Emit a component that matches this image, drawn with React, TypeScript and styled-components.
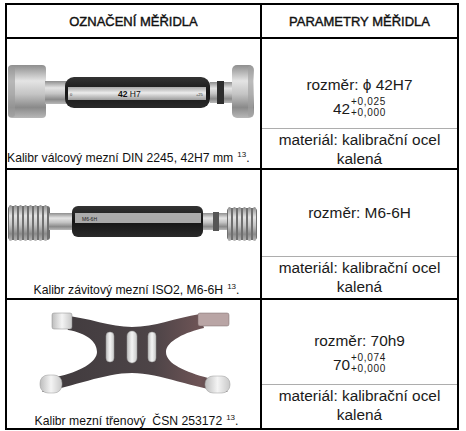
import { Fragment } from 'react';
import styled, { createGlobalStyle } from 'styled-components';

const GlobalStyle = createGlobalStyle`
	body {
		margin: 0;
		background: #fff;
		font-family: 'Liberation Sans', Arial, sans-serif;
	}
`;

const Page = styled.div`
	padding: 3px 0 0 5px;
`;

const Sheet = styled.div`
	display: grid;
	grid-template-columns: 253px 195px;
	grid-template-rows: 32px 129px 128px 128px;
	gap: 2px;
	padding: 2px;
	background: #000;
	width: max-content;
`;

const HeadCell = styled.div`
	background: #fff;
	display: flex;
	align-items: center;
	justify-content: center;
	padding-top: 1px;
	font-size: 13px;
	color: #111;
	-webkit-text-stroke: 0.4px #111;
`;

const ImageCell = styled.div`
	background: #fff;
	display: flex;
	flex-direction: column;
	overflow: hidden;
`;

const Art = styled.svg`
	display: block;
	flex: 1;
`;

const Caption = styled.div<{ $align: 'left' | 'center'; $lift: number }>`
	font-size: 12.2px;
	line-height: 14px;
	color: #111;
	white-space: nowrap;
	text-align: ${({ $align }) => $align};
	padding: 0 0 ${({ $lift }) => $lift}px ${({ $align }) => ($align === 'center' ? 6 : 0)}px;
`;

const Sup = styled.sup`
	font-size: 8px;
	line-height: 0;
	vertical-align: 5px;
	margin-left: 4px;
`;

const ParamCell = styled.div`
	background: #fff;
	display: flex;
	flex-direction: column;
	color: #1a1a1a;
	font-size: 15.4px;
`;

const Upper = styled.div<{ $pos: 'end' | 'center' }>`
	flex: 1;
	display: flex;
	flex-direction: column;
	align-items: center;
	justify-content: ${({ $pos }) => ($pos === 'end' ? 'flex-end' : 'center')};
	padding-bottom: ${({ $pos }) => ($pos === 'end' ? 7 : 2)}px;
`;

const Line = styled.div`
	line-height: 19px;
	white-space: nowrap;
`;

const Tol = styled.div`
	line-height: 24px;
	margin-top: 3px;
	white-space: nowrap;
`;

const Stack = styled.span`
	display: inline-flex;
	flex-direction: column;
	font-size: 10px;
	line-height: 10.5px;
	letter-spacing: 0.7px;
	vertical-align: 9px;
	margin-left: 1px;
`;

const Lower = styled.div<{ $h: number }>`
	height: ${({ $h }) => $h}px;
	border-top: 1px solid #adadad;
	padding-top: 1px;
	line-height: 19px;
	text-align: center;
`;

const Defs = () => (
	<defs>
		<linearGradient id='metal' x1='0' y1='0' x2='0' y2='1'>
			<stop offset='0' stopColor='#8e8e8e' />
			<stop offset='0.3' stopColor='#e4e4e4' />
			<stop offset='0.55' stopColor='#c4c4c4' />
			<stop offset='0.8' stopColor='#8a8a8a' />
			<stop offset='1' stopColor='#b8b8b8' />
		</linearGradient>
		<linearGradient id='band' x1='0' y1='0' x2='0' y2='1'>
			<stop offset='0' stopColor='#a8a8a8' />
			<stop offset='0.45' stopColor='#ececec' />
			<stop offset='1' stopColor='#9c9c9c' />
		</linearGradient>
		<linearGradient id='grip' x1='0' y1='0' x2='0' y2='1'>
			<stop offset='0' stopColor='#333' />
			<stop offset='0.5' stopColor='#161616' />
			<stop offset='1' stopColor='#2a2a2a' />
		</linearGradient>
		<linearGradient id='fork' x1='0' y1='0' x2='1' y2='0'>
			<stop offset='0' stopColor='#3f3a3d' />
			<stop offset='0.6' stopColor='#4d4447' />
			<stop offset='0.85' stopColor='#6e5456' />
			<stop offset='1' stopColor='#4a4043' />
		</linearGradient>
		<linearGradient id='pad' x1='0' y1='0' x2='1' y2='0'>
			<stop offset='0' stopColor='#bdbdbd' />
			<stop offset='0.5' stopColor='#f4f4f4' />
			<stop offset='1' stopColor='#c8c8c8' />
		</linearGradient>
	</defs>
);

const PlugGauge = () => (
	<Art width={253} height={112} viewBox='0 0 253 112'>
		<Defs />
		<g transform='translate(-7,-39)'>
			<rect x={8} y={65} width={38} height={53} rx={4} fill='url(#metal)' />
			<rect x={8} y={66} width={7} height={51} rx={3} fill='#9a9a9a' opacity={0.6} />
			<rect x={45} y={81} width={22} height={23} fill='url(#metal)' />
			<rect x={65} y={77} width={145} height={31} rx={9} fill='url(#grip)' />
			<rect x={68} y={87} width={138} height={13} fill='url(#band)' />
			<text x={70} y={96} fontSize={4} fill='#333' fontFamily='Liberation Sans'>0</text>
			<text x={118} y={97} fontSize={8.5} fill='#111' fontFamily='Liberation Sans'>
				<tspan fontWeight='bold'>42</tspan> H7
			</text>
			<text x={196} y={96} fontSize={4} fill='#333' fontFamily='Liberation Sans'>+25</text>
			<rect x={210} y={82} width={23} height={21} fill='url(#metal)' />
			<rect x={217} y={81} width={7} height={23} fill='#2e2e2e' />
			<rect x={232} y={65} width={22} height={53} rx={5} fill='url(#metal)' />
			<rect x={248} y={66} width={5} height={51} rx={2} fill='#a0a0a0' opacity={0.6} />
		</g>
	</Art>
);

const threadRidges = (x0: number, count: number, y: number, h: number) =>
	Array.from({ length: count }, (_, i) => (
		<rect key={i} x={x0 + i * 5} y={y} width={3} height={h} rx={1.5} fill='url(#metal)' />
	));

const ThreadGauge = () => (
	<Art width={253} height={113} viewBox='0 0 253 113'>
		<Defs />
		<g transform='translate(-7,-170)'>
			<rect x={8} y={206} width={42} height={34} rx={3} fill='#6f6f6f' />
			{threadRidges(9, 8, 205, 36)}
			<rect x={49} y={213} width={24} height={17} fill='url(#metal)' />
			<rect x={72} y={206} width={131} height={31} rx={6} fill='url(#grip)' />
			<rect x={75} y={213} width={126} height={10} fill='#c4c4c4' opacity={0.85} />
			<text x={82} y={220.5} fontSize={5} fill='#222' fontFamily='Liberation Sans'>M6-6H</text>
			<rect x={203} y={213} width={25} height={17} fill='url(#metal)' />
			<rect x={213} y={212} width={6} height={19} fill='#555' />
			<rect x={227} y={208} width={30} height={32} rx={3} fill='#6f6f6f' />
			{threadRidges(228, 6, 207, 34)}
		</g>
	</Art>
);

const SnapGauge = () => (
	<Art width={253} height={114} viewBox='0 0 253 114'>
		<Defs />
		<g transform='translate(-7,-300)'>
			<path
				d='M 62 315 C 90 318, 110 327, 132 327 C 155 327, 175 318, 200 314 L 204 328
				C 186 332, 166 341, 166 352 C 166 364, 186 372, 208 378 L 228 392
				C 195 389, 160 373, 132 373 C 105 373, 72 387, 42 392 L 56 377
				C 80 372, 97 362, 97 352 C 97 341, 86 333, 68 330 Z'
				fill='url(#fork)'
			/>
			<rect x={52} y={313} width={20} height={16} rx={2} fill='url(#pad)' stroke='#888' strokeWidth={0.5} />
			<rect x={198} y={313} width={31} height={13} rx={2} fill='#b9a5a5' stroke='#7a6a6a' strokeWidth={0.5} />
			<rect x={40} y={375} width={22} height={18} rx={8} fill='url(#pad)' stroke='#999' strokeWidth={0.5} />
			<rect x={205} y={376} width={25} height={17} rx={8} fill='url(#pad)' stroke='#999' strokeWidth={0.5} />
			<rect x={106} y={332} width={8} height={30} rx={4} fill='url(#pad)' stroke='#999' strokeWidth={0.5} />
			<rect x={127} y={331} width={10} height={32} rx={5} fill='url(#pad)' stroke='#999' strokeWidth={0.5} />
			<rect x={148} y={332} width={8} height={30} rx={4} fill='url(#pad)' stroke='#999' strokeWidth={0.5} />
		</g>
	</Art>
);

const PARAM_MATERIAL = 'materiál: kalibrační ocel kalená';

const rows = [
	{
		art: <PlugGauge />,
		caption: 'Kalibr válcový mezní DIN 2245, 42H7 mm',
		align: 'left' as const,
		lift: 3,
		size: 'rozměr: \u03d5 42H7',
		tol: { base: '42', up: '+0,025', down: '+0,000' },
		pos: 'end' as const,
		lower: 38,
	},
	{
		art: <ThreadGauge />,
		caption: 'Kalibr závitový mezní ISO2, M6-6H',
		align: 'center' as const,
		lift: 1,
		size: 'rozměr: M6-6H',
		tol: null,
		pos: 'center' as const,
		lower: 40,
	},
	{
		art: <SnapGauge />,
		caption: 'Kalibr mezní třenový\u00a0 ČSN 253172',
		align: 'center' as const,
		lift: 0,
		size: 'rozměr: 70h9',
		tol: { base: '70', up: '+0,074', down: '+0,000' },
		pos: 'end' as const,
		lower: 42,
	},
];

const App = () => (
	<>
		<GlobalStyle />
		<Page>
			<Sheet>
				<HeadCell>OZNAČENÍ MĚŘIDLA</HeadCell>
				<HeadCell>PARAMETRY MĚŘIDLA</HeadCell>
				{rows.map((row) => (
					<Fragment key={row.caption}>
						<ImageCell>
							{row.art}
							<Caption $align={row.align} $lift={row.lift}>
								{row.caption}
								<Sup>13</Sup>.
							</Caption>
						</ImageCell>
						<ParamCell>
							<Upper $pos={row.pos}>
								<Line>{row.size}</Line>
								{row.tol && (
									<Tol>
										{row.tol.base}
										<Stack>
											<span>{row.tol.up}</span>
											<span>{row.tol.down}</span>
										</Stack>
									</Tol>
								)}
							</Upper>
							<Lower $h={row.lower}>{PARAM_MATERIAL}</Lower>
						</ParamCell>
					</Fragment>
				))}
			</Sheet>
		</Page>
	</>
);

export default App;
